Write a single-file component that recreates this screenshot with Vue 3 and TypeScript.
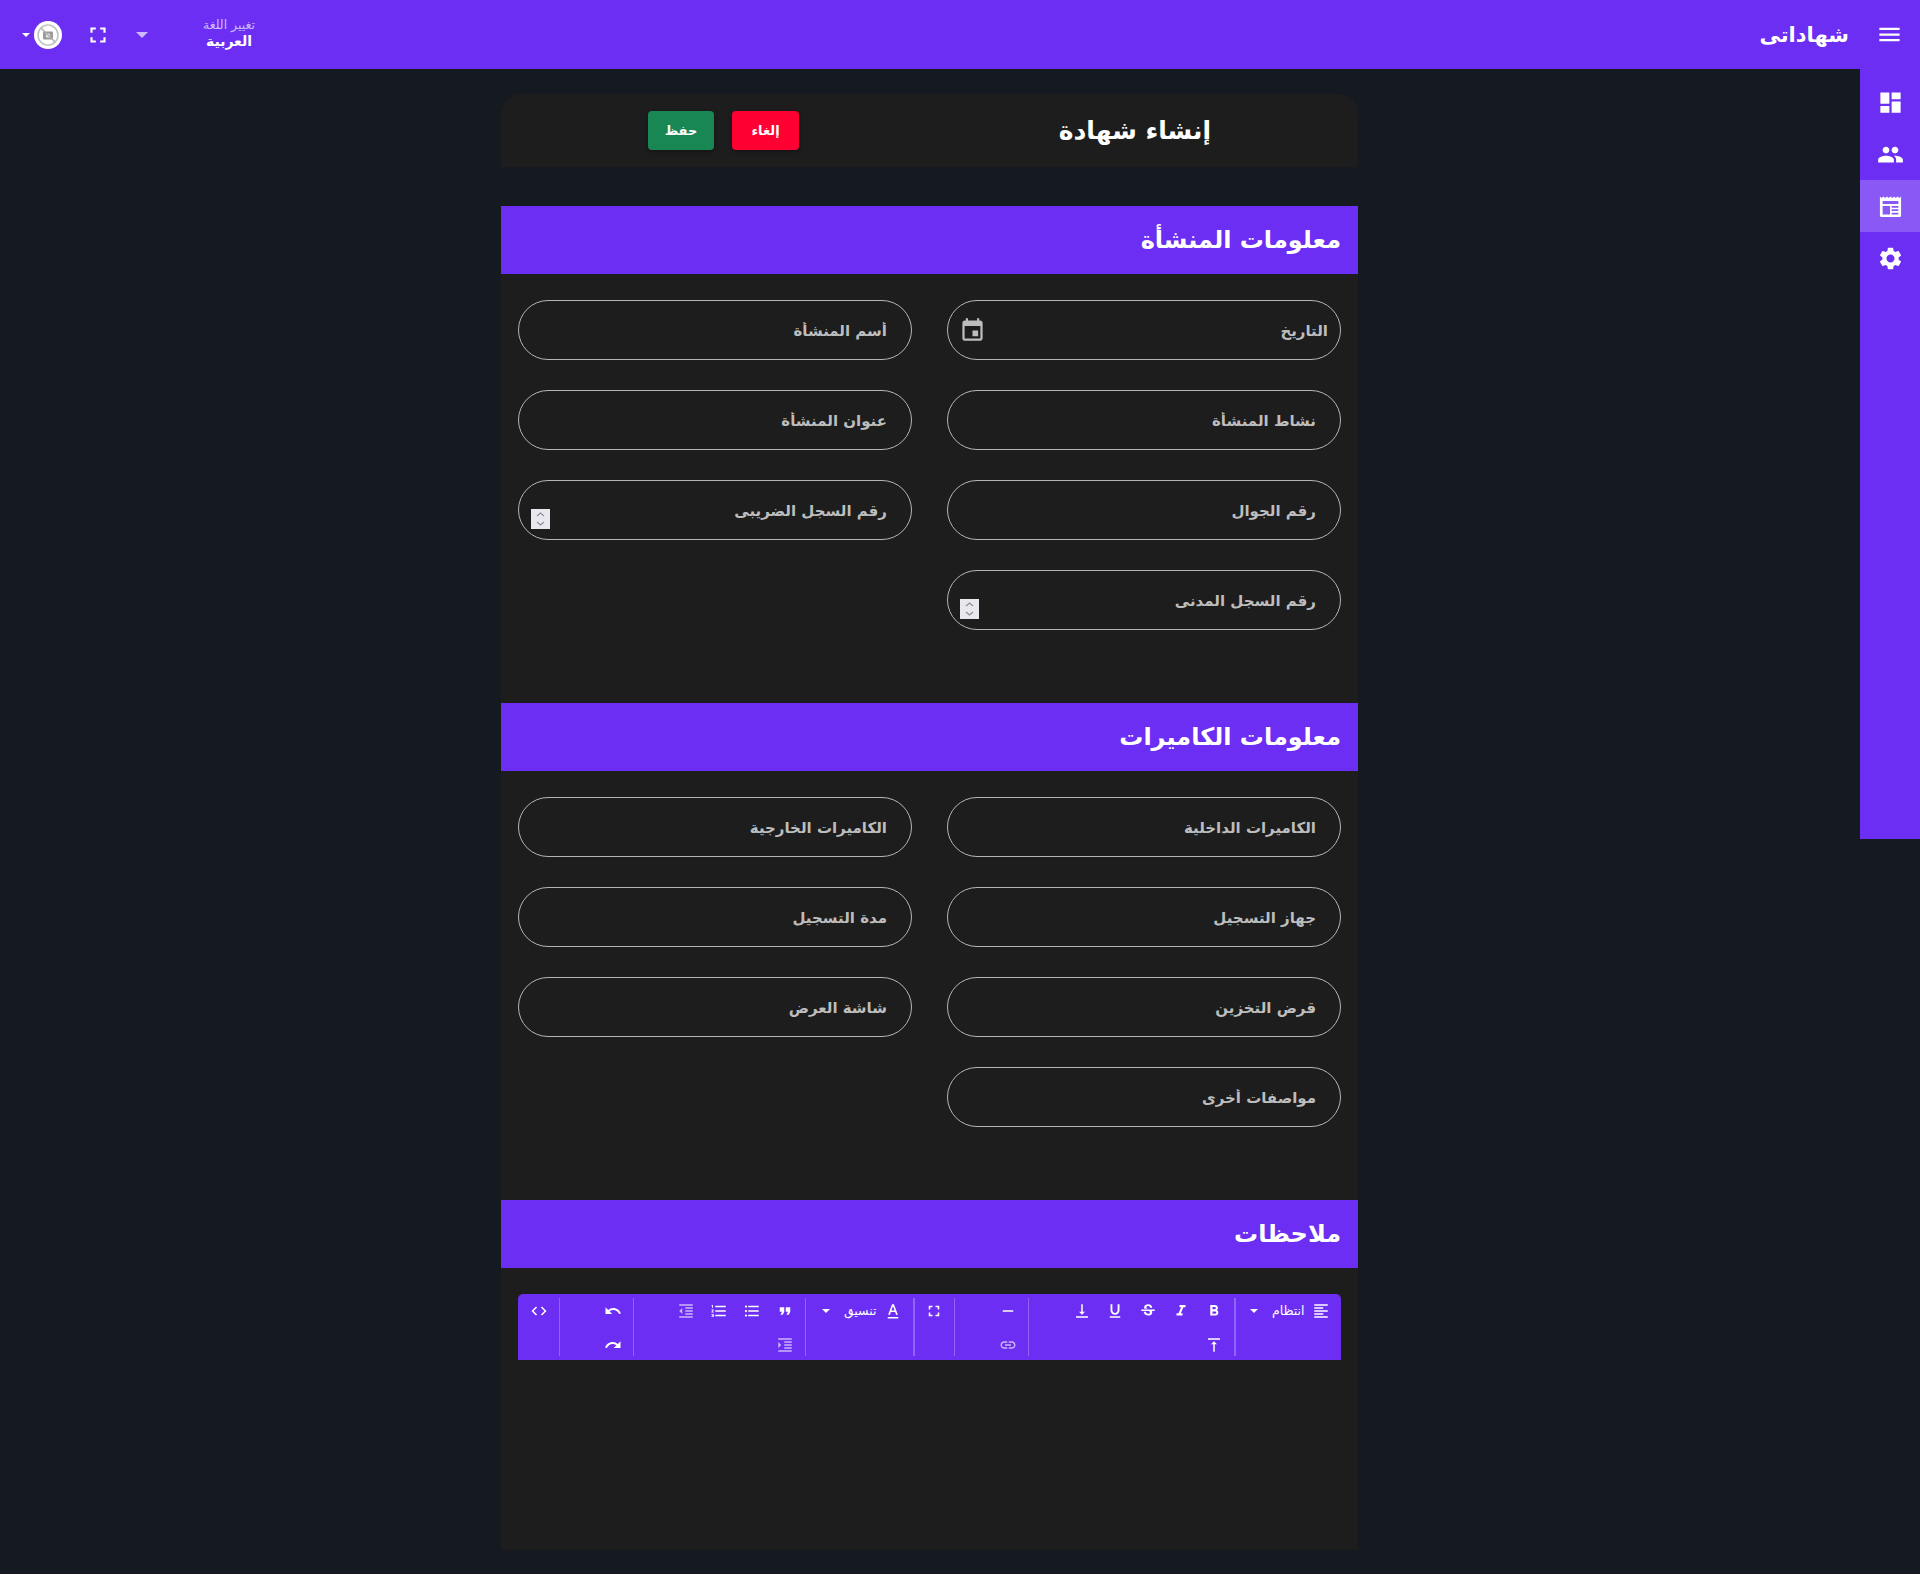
<template>
  <div class="page" dir="rtl">
    <header class="topbar">
      <div class="brand">
        <button class="menu-btn" type="button">
          <svg class="ic-27" viewBox="0 0 24 24"><path :d="icons.menu" /></svg>
        </button>
        <span class="brand-name">شهاداتى</span>
      </div>
      <div class="topbar-tools">
        <div class="lang">
          <div class="lang-text">
            <small>تغيير اللغة</small>
            <b>العربية</b>
          </div>
          <span class="caret caret-lang"></span>
        </div>
        <svg class="full" viewBox="0 0 24 24"><path :d="icons.fullscreen" /></svg>
        <div class="avatar-wrap">
          <div class="avatar">
            <svg viewBox="0 0 24 24" width="24" height="24">
              <circle cx="12" cy="12" r="10" fill="none" stroke="#c4c4c4" stroke-width="1.6" />
              <rect x="7" y="8.5" width="10" height="8" rx="1" fill="#9a9a9a" />
              <circle cx="12" cy="12.5" r="2.2" fill="#e8e8e8" />
              <path d="M5 5l14 14" stroke="#b0b0b0" stroke-width="1.4" />
            </svg>
          </div>
          <span class="caret caret-small"></span>
        </div>
      </div>
    </header>

    <div class="layout">
      <aside class="sidebar">
        <a v-for="item in sideItems" :key="item.name" class="side-item" :class="{ active: item.active }">
          <svg class="ic-27" viewBox="0 0 24 24"><path fill-rule="evenodd" :d="item.path" /></svg>
        </a>
      </aside>

      <main class="main">
        <div class="content">
          <div class="title-card">
            <h1>إنشاء شهادة</h1>
            <div class="actions">
              <button class="btn btn-cancel" type="button">إلغاء</button>
              <button class="btn btn-save" type="button">حفظ</button>
            </div>
          </div>

          <section v-for="sec in sections" :key="sec.title" class="section">
            <h2 class="section-head">{{ sec.title }}</h2>
            <div class="field-grid">
              <div v-for="f in sec.fields" :key="f.label" class="field">
                <input class="field-input" :class="{ 'is-date': f.date }" type="text" :placeholder="f.label" />
                <svg v-if="f.date" class="date-ic" viewBox="0 0 24 24"><path :d="icons.event" /></svg>
                <span v-if="f.spin" class="spin">
                  <svg viewBox="0 0 19 20" width="19" height="20">
                    <path d="M6 7l3.5-3L13 7M6 13l3.5 3L13 13" fill="none" stroke="#8e8e99" stroke-width="1.2" />
                  </svg>
                </span>
              </div>
            </div>
          </section>

          <section class="section notes">
            <h2 class="section-head">ملاحظات</h2>
            <div class="editor">
              <div class="toolbar">
                <div v-for="(group, i) in toolbar" :key="i" class="tool-group" :class="{ thick: group.thick }" :style="{ width: group.width + 'px' }">
                  <div class="tool-row" :style="{ width: group.cols * 33 + 'px' }">
                    <template v-for="tool in group.tools" :key="tool.name">
                      <div v-if="tool.label" class="tool-select">
                        <svg class="ic-18" viewBox="0 0 24 24"><path :d="tool.path" /></svg>
                        <span class="tool-label">{{ tool.label }}</span>
                        <span class="caret caret-small"></span>
                      </div>
                      <button v-else class="tool" :class="{ dim: tool.dim }" type="button">
                        <svg class="ic-18" viewBox="0 0 24 24"><path :d="tool.path" /></svg>
                      </button>
                    </template>
                  </div>
                </div>
              </div>
              <div class="editor-body"></div>
            </div>
          </section>
        </div>
      </main>
    </div>
  </div>
</template>

<script setup lang="ts">
// Material icon paths
const icons: Record<string, string> = {
  menu: 'M3 18h18v-2H3v2zm0-5h18v-2H3v2zm0-7v2h18V6H3z',
  fullscreen: 'M7 14H5v5h5v-2H7v-3zm-2-4h2V7h3V5H5v5zm12 7h-3v2h5v-5h-2v3zM14 5v2h3v3h2V5h-5z',
  event: 'M17 12h-5v5h5v-5zM16 1v2H8V1H6v2H5c-1.11 0-1.99.9-1.99 2L3 19c0 1.1.89 2 2 2h14c1.1 0 2-.9 2-2V5c0-1.1-.9-2-2-2h-1V1h-2zm3 18H5V8h14v11z',
  dashboard: 'M3 13h8V3H3v10zm0 8h8v-6H3v6zm10 0h8V11h-8v10zm0-18v6h8V3h-8z',
  people: 'M16 11c1.66 0 2.99-1.34 2.99-3S17.66 5 16 5c-1.66 0-3 1.34-3 3s1.34 3 3 3zm-8 0c1.66 0 2.99-1.34 2.99-3S9.66 5 8 5C6.34 5 5 6.34 5 8s1.34 3 3 3zm0 2c-2.33 0-7 1.17-7 3.5V19h14v-2.5c0-2.33-4.67-3.5-7-3.5zm8 0c-.29 0-.62.02-.97.05 1.16.84 1.97 1.97 1.97 3.45V19h6v-2.5c0-2.33-4.67-3.5-7-3.5z',
  // serrated sheet, holes are cut with fill-rule evenodd
  paper: 'M2.600 3l1.570 1.500L5.740 3l1.570 1.500L8.880 3l1.570 1.500L12 3l1.570 1.500L15.140 3l1.570 1.500L18.280 3l1.570 1.500L21.400 3v17c0 .8-.6 1.400-1.400 1.400H4c-.8 0-1.400-.6-1.400-1.400V3zM5 7v2.800h14V7H5zm0 4.600v7.400h6.600v-7.400H5zm8 0V13h6v-1.400h-6zm0 2.900v1.400h6v-1.400h-6zm0 3v1.500h6v-1.500h-6z',
  settings: 'M19.14 12.94c.04-.3.06-.61.06-.94 0-.32-.02-.64-.07-.94l2.03-1.58c.18-.14.23-.41.12-.61l-1.92-3.32c-.12-.22-.37-.29-.59-.22l-2.39.96c-.5-.38-1.03-.7-1.62-.94l-.36-2.54c-.04-.24-.24-.41-.48-.41h-3.84c-.24 0-.43.17-.47.41l-.36 2.54c-.59.24-1.13.57-1.62.94l-2.39-.96c-.22-.08-.47 0-.59.22L2.74 8.87c-.12.21-.08.47.12.61l2.03 1.58c-.05.3-.09.63-.09.94s.02.64.07.94l-2.03 1.58c-.18.14-.23.41-.12.61l1.92 3.32c.12.22.37.29.59.22l2.39-.96c.5.38 1.03.7 1.62.94l.36 2.54c.05.24.24.41.48.41h3.84c.24 0 .44-.17.47-.41l.36-2.54c.59-.24 1.13-.56 1.62-.94l2.39.96c.22.08.47 0 .59-.22l1.92-3.32c.12-.22.07-.47-.12-.61l-2.01-1.58zM12 15.6c-1.98 0-3.6-1.62-3.6-3.6s1.62-3.6 3.6-3.6 3.6 1.62 3.6 3.6-1.62 3.6-3.6 3.6z',
  align: 'M3 21h18v-2H3v2zm0-4h12v-2H3v2zm0-4h18v-2H3v2zm0-4h12V7H3v2zm0-6v2h18V3H3z',
  bold: 'M15.6 10.79c.97-.67 1.65-1.77 1.65-2.79 0-2.26-1.75-4-4-4H7v14h7.04c2.09 0 3.71-1.7 3.71-3.79 0-1.52-.86-2.82-2.15-3.42zM10 6.5h3c.83 0 1.5.67 1.5 1.5s-.67 1.5-1.5 1.5h-3v-3zm3.5 9H10v-3h3.5c.83 0 1.5.67 1.5 1.5s-.67 1.5-1.5 1.5z',
  italic: 'M10 4v3h2.21l-3.42 8H6v3h8v-3h-2.21l3.42-8H18V4z',
  strike: 'M6.85 7.08C6.85 4.37 9.45 3 12.24 3c1.64 0 3 .49 3.9 1.28.77.65 1.46 1.73 1.46 3.24h-3.01c0-.31-.05-.59-.15-.85-.29-.86-1.2-1.28-2.25-1.28-1.86 0-2.34 1.02-2.34 1.7 0 .48.25.88.74 1.21.38.25.77.48 1.41.7H7.39c-.21-.34-.54-.89-.54-1.92zM21 12v-2H3v2h9.62c1.15.45 1.96.75 1.96 1.97 0 1-.81 1.67-2.28 1.67-1.54 0-2.93-.54-2.93-2.51H6.4c0 .55.08 1.13.24 1.58.81 2.29 3.29 3.3 5.67 3.3 2.27 0 5.3-.89 5.3-4.05 0-.3-.01-1.16-.48-1.94H21V12z',
  underline: 'M12 17c3.31 0 6-2.69 6-6V3h-2.5v8c0 1.93-1.57 3.5-3.5 3.5S8.5 12.93 8.5 11V3H6v8c0 3.31 2.69 6 6 6zm-7 2v2h14v-2H5z',
  sub: 'M16 13h-3V3h-2v10H8l4 4 4-4zM4 19v2h16v-2H4z',
  sup: 'M8 11h3v10h2V11h3l-4-4-4 4zM4 3v2h16V3H4z',
  hr: 'M19 13H5v-2h14v2z',
  link: 'M3.9 12c0-1.71 1.39-3.1 3.1-3.1h4V7H7c-2.76 0-5 2.24-5 5s2.24 5 5 5h4v-1.9H7c-1.71 0-3.1-1.39-3.1-3.1zM8 13h8v-2H8v2zm9-6h-4v1.9h4c1.71 0 3.1 1.39 3.1 3.1s-1.39 3.1-3.1 3.1h-4V17h4c2.76 0 5-2.24 5-5s-2.24-5-5-5z',
  color: 'M5 20h14v2H5v-2zm.49-3h2.42l1.27-3.58h5.65L16.09 17h2.42L13.25 3h-2.5L5.49 17zm4.42-5.61l2.03-5.79h.12l2.03 5.79H9.91z',
  quote: 'M6 17h3l2-4V7H5v6h3zm8 0h3l2-4V7h-6v6h3z',
  ul: 'M4 10.5c-.83 0-1.5.67-1.5 1.5s.67 1.5 1.5 1.5 1.5-.67 1.5-1.5-.67-1.5-1.5-1.5zm0-6c-.83 0-1.5.67-1.5 1.5S3.17 7.5 4 7.5 5.5 6.83 5.5 6 4.83 4.5 4 4.5zm0 12c-.83 0-1.5.68-1.5 1.5s.68 1.5 1.5 1.5 1.5-.68 1.5-1.5-.67-1.5-1.5-1.5zM7 19h14v-2H7v2zm0-6h14v-2H7v2zm0-8v2h14V5H7z',
  ol: 'M2 17h2v.5H3v1h1v.5H2v1h3v-4H2v1zm1-9h1V4H2v1h1v3zm-1 3h1.8L2 13.1v.9h3v-1H3.2L5 10.9V10H2v1zm5-6v2h14V5H7zm0 14h14v-2H7v2zm0-6h14v-2H7v2z',
  outdent: 'M11 17h10v-2H11v2zm-8-5l4 4V8l-4 4zm0 9h18v-2H3v2zM3 3v2h18V3H3zm8 6h10V7H11v2zm0 4h10v-2H11v2z',
  indent: 'M3 21h18v-2H3v2zM3 8v8l4-4-4-4zm8 9h10v-2H11v2zM3 3v2h18V3H3zm8 6h10V7H11v2zm0 4h10v-2H11v2z',
  undo: 'M12.5 8c-2.65 0-5.05.99-6.9 2.6L2 7v9h9l-3.62-3.62c1.39-1.16 3.16-1.88 5.12-1.88 3.54 0 6.55 2.31 7.6 5.5l2.37-.78C21.08 11.03 17.15 8 12.5 8z',
  redo: 'M18.4 10.6C16.55 8.99 14.15 8 11.5 8c-4.65 0-8.58 3.03-9.96 7.22L3.9 16c1.05-3.19 4.05-5.5 7.6-5.5 1.95 0 3.73.72 5.12 1.88L13 16h9V7l-3.6 3.6z',
  code: 'M9.4 16.6L4.8 12l4.6-4.6L8 6l-6 6 6 6 1.4-1.4zm5.2 0l4.6-4.6-4.6-4.6L16 6l6 6-6 6-1.4-1.4z'
}

const sideItems = [
  { name: 'dashboard', path: icons.dashboard, active: false },
  { name: 'users', path: icons.people, active: false },
  { name: 'certificates', path: icons.paper, active: true },
  { name: 'settings', path: icons.settings, active: false }
]

interface Field {
  label: string
  date?: boolean
  spin?: boolean
}

const sections: { title: string; fields: Field[] }[] = [
  {
    title: 'معلومات المنشأة',
    fields: [
      { label: 'التاريخ', date: true },
      { label: 'أسم المنشأة' },
      { label: 'نشاط المنشأة' },
      { label: 'عنوان المنشأة' },
      { label: 'رقم الجوال' },
      { label: 'رقم السجل الضريبى', spin: true },
      { label: 'رقم السجل المدنى', spin: true }
    ]
  },
  {
    title: 'معلومات الكاميرات',
    fields: [
      { label: 'الكاميرات الداخلية' },
      { label: 'الكاميرات الخارجية' },
      { label: 'جهاز التسجيل' },
      { label: 'مدة التسجيل' },
      { label: 'قرض التخزين' },
      { label: 'شاشة العرض' },
      { label: 'مواصفات أخرى' }
    ]
  }
]

interface Tool {
  name: string
  path: string
  label?: string
  dim?: boolean
}

const tool = (name: string, dim = false): Tool => ({ name, path: icons[name], dim })

const toolbar: { width: number; cols: number; thick?: boolean; tools: Tool[] }[] = [
  { width: 107, cols: 3, thick: true, tools: [{ name: 'align', path: icons.align, label: 'انتظام' }] },
  { width: 206, cols: 5, tools: ['bold', 'italic', 'strike', 'underline', 'sub', 'sup'].map((n) => tool(n)) },
  { width: 74, cols: 1, tools: [tool('hr'), tool('link', true)] },
  { width: 41, cols: 1, thick: true, tools: [tool('fullscreen')] },
  { width: 108, cols: 3, tools: [{ name: 'color', path: icons.color, label: 'تنسيق' }] },
  { width: 172, cols: 4, tools: [tool('quote'), tool('ul'), tool('ol'), tool('outdent', true), tool('indent', true)] },
  { width: 74, cols: 1, tools: [tool('undo'), tool('redo')] },
  { width: 41, cols: 1, tools: [tool('code')] }
]
</script>

<style>
body {
  background: #fff;
}
</style>

<style scoped>
.page {
  width: 1920px;
  height: 1574px;
  overflow: hidden;
  background: #151a21;
  font-family: "DejaVu Sans", "Noto Sans", sans-serif;
  color: #fff;
}

.ic-27 {
  width: 27px;
  height: 27px;
  fill: #fff;
  display: block;
}

.ic-18 {
  width: 18px;
  height: 18px;
  fill: #fff;
  display: block;
  flex-shrink: 0;
}

.caret {
  display: block;
  width: 0;
  height: 0;
  border-style: solid;
  border-color: #fff transparent transparent;
}

.caret-small {
  border-width: 4px 4px 0;
}

/* Top bar */
.topbar {
  height: 69px;
  background: #6c2ef2;
  display: flex;
  align-items: center;
  justify-content: space-between;
}

.brand {
  display: flex;
  align-items: center;
}

.menu-btn {
  width: 60px;
  height: 69px;
  padding: 0 2px 0 0;
  border: 0;
  background: none;
  display: flex;
  align-items: center;
  justify-content: center;
}

.brand-name {
  margin-right: 11px;
  font-size: 21px;
  font-weight: 700;
}

.topbar-tools {
  display: flex;
  align-items: center;
  padding-left: 22px;
}

.lang {
  display: flex;
  align-items: center;
  gap: 51px;
}

.lang-text {
  width: 60px;
  margin-top: -3px;
  display: flex;
  flex-direction: column;
  align-items: center;
  line-height: 16px;
}

.lang-text small {
  font-size: 12.5px;
  color: #cdb9fb;
}

.lang-text b {
  font-size: 14px;
}

.caret-lang {
  border-width: 6px 6px 0;
  border-top-color: #cdb9fb;
}

.full {
  width: 26px;
  height: 26px;
  fill: #fff;
  display: block;
  margin-right: 25px;
}

.avatar-wrap {
  display: flex;
  align-items: center;
  gap: 4px;
  margin-right: 23px;
}

.avatar {
  width: 28px;
  height: 28px;
  border-radius: 50%;
  background: #fff;
  display: flex;
  align-items: center;
  justify-content: center;
}

/* Layout */
.layout {
  display: flex;
  align-items: flex-start;
}

.sidebar {
  width: 60px;
  height: 770px;
  flex-shrink: 0;
  padding-top: 7px;
  box-sizing: border-box;
  background: #6c2ef2;
}

.side-item {
  height: 52px;
  display: flex;
  align-items: center;
  justify-content: center;
}

.side-item.active {
  background: #8a58f5;
}

.main {
  flex: 1;
  padding-right: 1px;
  display: flex;
  justify-content: center;
}

.content {
  width: 857px;
  padding-top: 25px;
}

.title-card {
  height: 73px;
  padding: 0 147px;
  box-sizing: border-box;
  background: #1d1d1d;
  border-radius: 20px 20px 0 0;
  display: flex;
  align-items: center;
  justify-content: space-between;
  margin-bottom: 39px;
}

.title-card h1 {
  margin: 0;
  font-size: 25px;
  font-weight: 700;
}

.actions {
  display: flex;
  gap: 18px;
}

.btn {
  height: 39px;
  padding: 0;
  border: 0;
  border-radius: 4px;
  color: #fff;
  font-family: inherit;
  font-size: 13px;
  font-weight: 700;
  box-shadow: 0 2px 4px rgba(0, 0, 0, 0.3);
}

.btn-cancel {
  width: 67px;
  background: #ff0032;
}

.btn-save {
  width: 66px;
  background: #198754;
}

/* Sections */
.section {
  background: #1d1d1d;
  padding-bottom: 73px;
}

.section-head {
  height: 68px;
  margin: 0;
  padding: 0 17px;
  background: #6c2ef2;
  display: flex;
  align-items: center;
  font-size: 24px;
  font-weight: 700;
}

.field-grid {
  padding: 26px 17px 0;
  display: grid;
  grid-template-columns: 394px 394px;
  column-gap: 35px;
  row-gap: 30px;
}

.field {
  position: relative;
  height: 60px;
}

.field-input {
  width: 100%;
  height: 100%;
  box-sizing: border-box;
  padding: 2px 24px 0;
  background: transparent;
  border: 1px solid #b5b5b5;
  border-radius: 30px;
  outline: none;
  color: #c8c8c8;
  font-family: inherit;
  font-size: 15px;
  font-weight: 700;
}

.field-input::placeholder {
  color: #bdbdbd;
  opacity: 1;
}

.field-input.is-date {
  padding-right: 12px;
}

.date-ic {
  position: absolute;
  left: 12px;
  top: 17px;
  width: 27px;
  height: 27px;
  fill: #bdbdbd;
}

.spin {
  position: absolute;
  left: 13px;
  top: 29px;
  width: 19px;
  height: 20px;
  background: #e9e9ed;
}

/* Notes editor */
.notes {
  padding-bottom: 0;
}

.editor {
  padding: 26px 17px 0;
}

.toolbar {
  height: 66px;
  background: #6c2ef2;
  border-radius: 5px 5px 0 0;
  display: flex;
  align-items: stretch;
}

.tool-group {
  position: relative;
  box-sizing: border-box;
  padding-right: 4px;
}

.tool-group::after {
  content: '';
  position: absolute;
  left: 0;
  top: 4px;
  bottom: 4px;
  width: 1px;
  background: #8f64f8;
}

.tool-group.thick::after {
  width: 2px;
}

.tool-group:last-child::after {
  display: none;
}

.tool-row {
  display: flex;
  flex-wrap: wrap;
  row-gap: 1px;
}

.tool {
  width: 33px;
  height: 33px;
  padding: 0;
  border: 0;
  background: none;
  display: flex;
  align-items: center;
  justify-content: center;
}

.tool.dim svg {
  opacity: 0.65;
}

.tool-select {
  height: 33px;
  display: flex;
  align-items: center;
  padding-right: 7.5px;
}

.tool-label {
  margin: 0 7px 0 14px;
  font-size: 12.5px;
  white-space: nowrap;
}

.editor-body {
  height: 190px;
}
</style>
